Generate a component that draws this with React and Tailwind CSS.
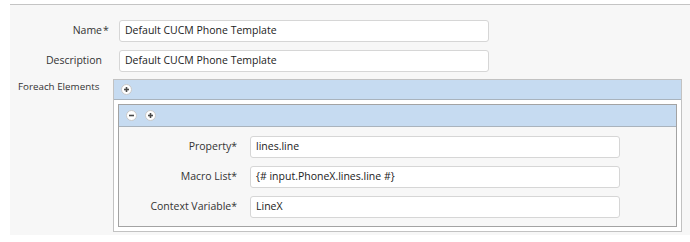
function CircleBtn({ kind }) {
  return (
    <span className="flex h-[11px] w-[11px] items-center justify-center rounded-full border border-[#c9c9c9] bg-white">
      <svg width="7" height="7" viewBox="0 0 7 7">
        <path d="M1 3.5h5" stroke="#4a4a4a" strokeWidth="1.6" />
        {kind === "plus" && <path d="M3.5 1v5" stroke="#4a4a4a" strokeWidth="1.6" />}
      </svg>
    </span>
  );
}

function Input({ value }) {
  return (
    <div className="flex h-[22px] w-[370px] items-center rounded-[3px] border border-[#d6d6d6] bg-white px-[5px] text-[10.5px] text-[#222]">
      {value}
    </div>
  );
}

function TopRow({ label, required, value }) {
  return (
    <div className="mb-[8px] flex items-center">
      <div className="w-[92px] text-right text-[10.5px]">
        <span className="relative">
          {label}
          {required && <span className="absolute left-full pl-[1px]">*</span>}
        </span>
      </div>
      <div className="ml-[17px]">
        <Input value={value} />
      </div>
    </div>
  );
}

function InnerRow({ label, value }) {
  return (
    <div className="mb-[8px] flex items-center last:mb-0">
      <div className="w-[118px] text-right text-[10.5px]">{label}</div>
      <div className="ml-[13px]">
        <Input value={value} />
      </div>
    </div>
  );
}

export default function App() {
  return (
    <div className="h-[242px] w-[690px] bg-white pl-[10px] pt-[4px] font-['Open_Sans',sans-serif] text-[#333]">
      <div className="h-[231px] border-t border-[#c4c4c4] bg-[#f7f7f7] pt-[15px]">
        <TopRow label="Name" required value="Default CUCM Phone Template" />
        <TopRow label="Description" value="Default CUCM Phone Template" />

        {/* FOREACH */}
        <div className="mt-[-1px] flex items-start">
          <div className="w-[103px] pl-[8px] pt-[1px] text-[9.8px]">Foreach Elements</div>
          <div className="w-[569px] border border-[#c2c2c2] bg-white">
            <div className="flex h-[20px] items-center border-b border-[#a9b3bd] bg-[#c6dbf1] pl-[7px]">
              <CircleBtn kind="plus" />
            </div>
            <div className="p-[4px]">
              <div className="border border-[#a3a3a3] bg-[#f7f7f7]">
                <div className="flex h-[22px] items-center gap-[8px] border-b border-[#a9b3bd] bg-[#c6dbf1] pl-[7px]">
                  <CircleBtn kind="minus" />
                  <CircleBtn kind="plus" />
                </div>
                <div className="pb-[8px] pt-[9px]">
                  <InnerRow label="Property*" value="lines.line" />
                  <InnerRow label="Macro List*" value="{# input.PhoneX.lines.line #}" />
                  <InnerRow label="Context Variable*" value="LineX" />
                </div>
              </div>
            </div>
          </div>
        </div>
      </div>
    </div>
  );
}
